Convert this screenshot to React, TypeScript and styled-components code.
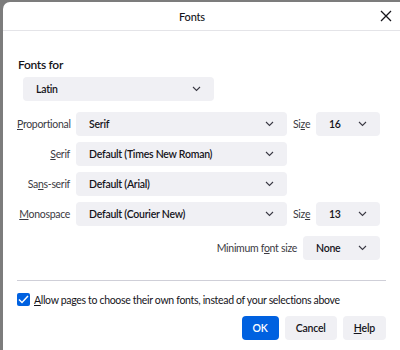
import { FC, ReactNode } from "react";
import styled, { createGlobalStyle } from "styled-components";

const GlobalStyle = createGlobalStyle`
  html, body {
    margin: 0;
    padding: 0;
    background: #7c7c7c;
    font-family: Lato, "Noto Sans", sans-serif;
    color: #15141a;
  }
  #root {
    width: 400px;
    height: 350px;
    overflow: hidden;
  }
`;

const ChevronDown = () => (
  <svg width="9" height="6" viewBox="0 0 9 6" fill="none">
    <path d="M1 1l3.5 3.5L8 1" stroke="#3a3944" strokeWidth="1.1" />
  </svg>
);

const CloseIcon = () => (
  <svg width="12" height="12" viewBox="0 0 12 12" fill="none">
    <path d="M1 1l10 10M11 1L1 11" stroke="#15141a" strokeWidth="1.3" />
  </svg>
);

const CheckIcon = () => (
  <svg width="11" height="9" viewBox="0 0 11 9" fill="none">
    <path d="M1 4.5l3 3L10 1" stroke="#fff" strokeWidth="1.5" />
  </svg>
);

interface SelectProps {
  value: string;
  width: number;
}

const Select: FC<SelectProps> = ({ value, width }) => (
  <SelectBox style={{ width }}>
    <span>{value}</span>
    <ChevronDown />
  </SelectBox>
);

const Key: FC<{ children: ReactNode }> = ({ children }) => <u>{children}</u>;

const FONT_ROWS = [
  { label: <><Key>P</Key>roportional</>, value: "Serif", size: "16", sizeLabel: <>Si<Key>z</Key>e</> },
  { label: <><Key>S</Key>erif</>, value: "Default (Times New Roman)" },
  { label: <>Sa<Key>n</Key>s-serif</>, value: "Default (Arial)" },
  { label: <><Key>M</Key>onospace</>, value: "Default (Courier New)", size: "13", sizeLabel: <>Siz<Key>e</Key></> },
];

export default function App() {
  return (
    <>
      <GlobalStyle />
      <Dialog>
        <Header>
          <span />
          <Title>Fonts</Title>
          <CloseButton>
            <CloseIcon />
          </CloseButton>
        </Header>

        <Body>
          <SectionTitle>Fonts for</SectionTitle>
          <LangWrapper>
            <Select value="Latin" width={191} />
          </LangWrapper>

          <FontGrid>
            {FONT_ROWS.map((row, i) => (
              <FontRow key={i}>
                <Label>{row.label}</Label>
                <Select value={row.value} width={211} />
                {row.size && (
                  <>
                    <SizeLabel>{row.sizeLabel}</SizeLabel>
                    <Select value={row.size} width={64} />
                  </>
                )}
              </FontRow>
            ))}
          </FontGrid>

          <MinRow>
            <Label>
              Minimum f<Key>o</Key>nt size
            </Label>
            <Select value="None" width={77} />
          </MinRow>

          <Separator />

          <CheckRow>
            <CheckBox>
              <CheckIcon />
            </CheckBox>
            <CheckLabel>
              <Key>A</Key>llow pages to choose their own fonts, instead of your selections above
            </CheckLabel>
          </CheckRow>

          <ButtonRow>
            <Button primary>OK</Button>
            <Button>Cancel</Button>
            <Button>
              <Key>H</Key>elp
            </Button>
          </ButtonRow>
        </Body>
      </Dialog>
    </>
  );
}

const Dialog = styled.div`
  margin: 2px 0 0 3px;
  width: 397px;
  height: 348px;
  background: #fff;
  border-top-left-radius: 7px;
  display: flex;
  flex-direction: column;
`;

const Header = styled.div`
  display: grid;
  grid-template-columns: 40px 1fr 40px;
  align-items: center;
  height: 28px;
  border-bottom: 1px solid #e4e4e8;
`;

const Title = styled.div`
  text-align: center;
  font-size: 11px;
  font-weight: 500;
  letter-spacing: -0.2px;
  padding-right: 19px;
`;

const CloseButton = styled.div`
  display: flex;
  justify-content: center;
  align-items: center;
  padding-left: 11px;
`;

const Body = styled.div`
  padding: 26px 14px 0 14px;
  display: flex;
  flex-direction: column;
`;

const SectionTitle = styled.div`
  font-size: 12px;
  font-weight: 600;
  letter-spacing: -0.3px;
  line-height: 16px;
  padding-left: 1px;
`;

const LangWrapper = styled.div`
  margin: 4px 0 0 6px;
`;

const SelectBox = styled.div`
  box-sizing: border-box;
  height: 24px;
  background: #f0f0f4;
  border-radius: 4px;
  display: flex;
  align-items: center;
  justify-content: space-between;
  padding: 0 13px 0 13px;
  font-size: 10.5px;
  font-weight: 600;
  letter-spacing: -0.25px;
  color: #15141a;
  flex-shrink: 0;
`;

const FontGrid = styled.div`
  margin-top: 11px;
  display: flex;
  flex-direction: column;
  gap: 6px;
`;

const FontRow = styled.div`
  display: flex;
  align-items: center;
  gap: 6px;
`;

const Label = styled.div`
  width: 53px;
  text-align: right;
  font-size: 10.5px;
  letter-spacing: -0.3px;
  color: #3b3a42;
  white-space: nowrap;
  flex-shrink: 0;
  u {
    text-underline-offset: 1px;
  }
`;

const SizeLabel = styled(Label)`
  width: 17px;
  text-align: left;
`;

const MinRow = styled.div`
  margin-top: 10px;
  display: flex;
  justify-content: flex-end;
  align-items: center;
  gap: 6px;
  padding-right: 6px;

  ${Label} {
    width: auto;
  }
`;

const Separator = styled.div`
  margin-top: 20px;
  height: 1px;
  background: #cfcfd8;
`;

const CheckRow = styled.div`
  margin-top: 12px;
  display: flex;
  align-items: center;
  gap: 4px;
`;

const CheckBox = styled.div`
  width: 13px;
  height: 13px;
  border-radius: 2px;
  background: #0061e0;
  display: flex;
  align-items: center;
  justify-content: center;
`;

const CheckLabel = styled.div`
  font-size: 10.5px;
  letter-spacing: -0.32px;
  color: #15141a;
`;

const ButtonRow = styled.div`
  margin-top: 10px;
  display: flex;
  justify-content: flex-end;
  gap: 6px;
`;

const Button = styled.div<{ primary?: boolean }>`
  box-sizing: border-box;
  height: 24px;
  padding: 0 11px;
  min-width: 36px;
  border-radius: 4px;
  display: flex;
  align-items: center;
  justify-content: center;
  font-size: 10.5px;
  font-weight: 600;
  letter-spacing: -0.2px;
  background: ${({ primary }) => (primary ? "#0061e0" : "#f0f0f4")};
  color: ${({ primary }) => (primary ? "#fff" : "#15141a")};
`;
